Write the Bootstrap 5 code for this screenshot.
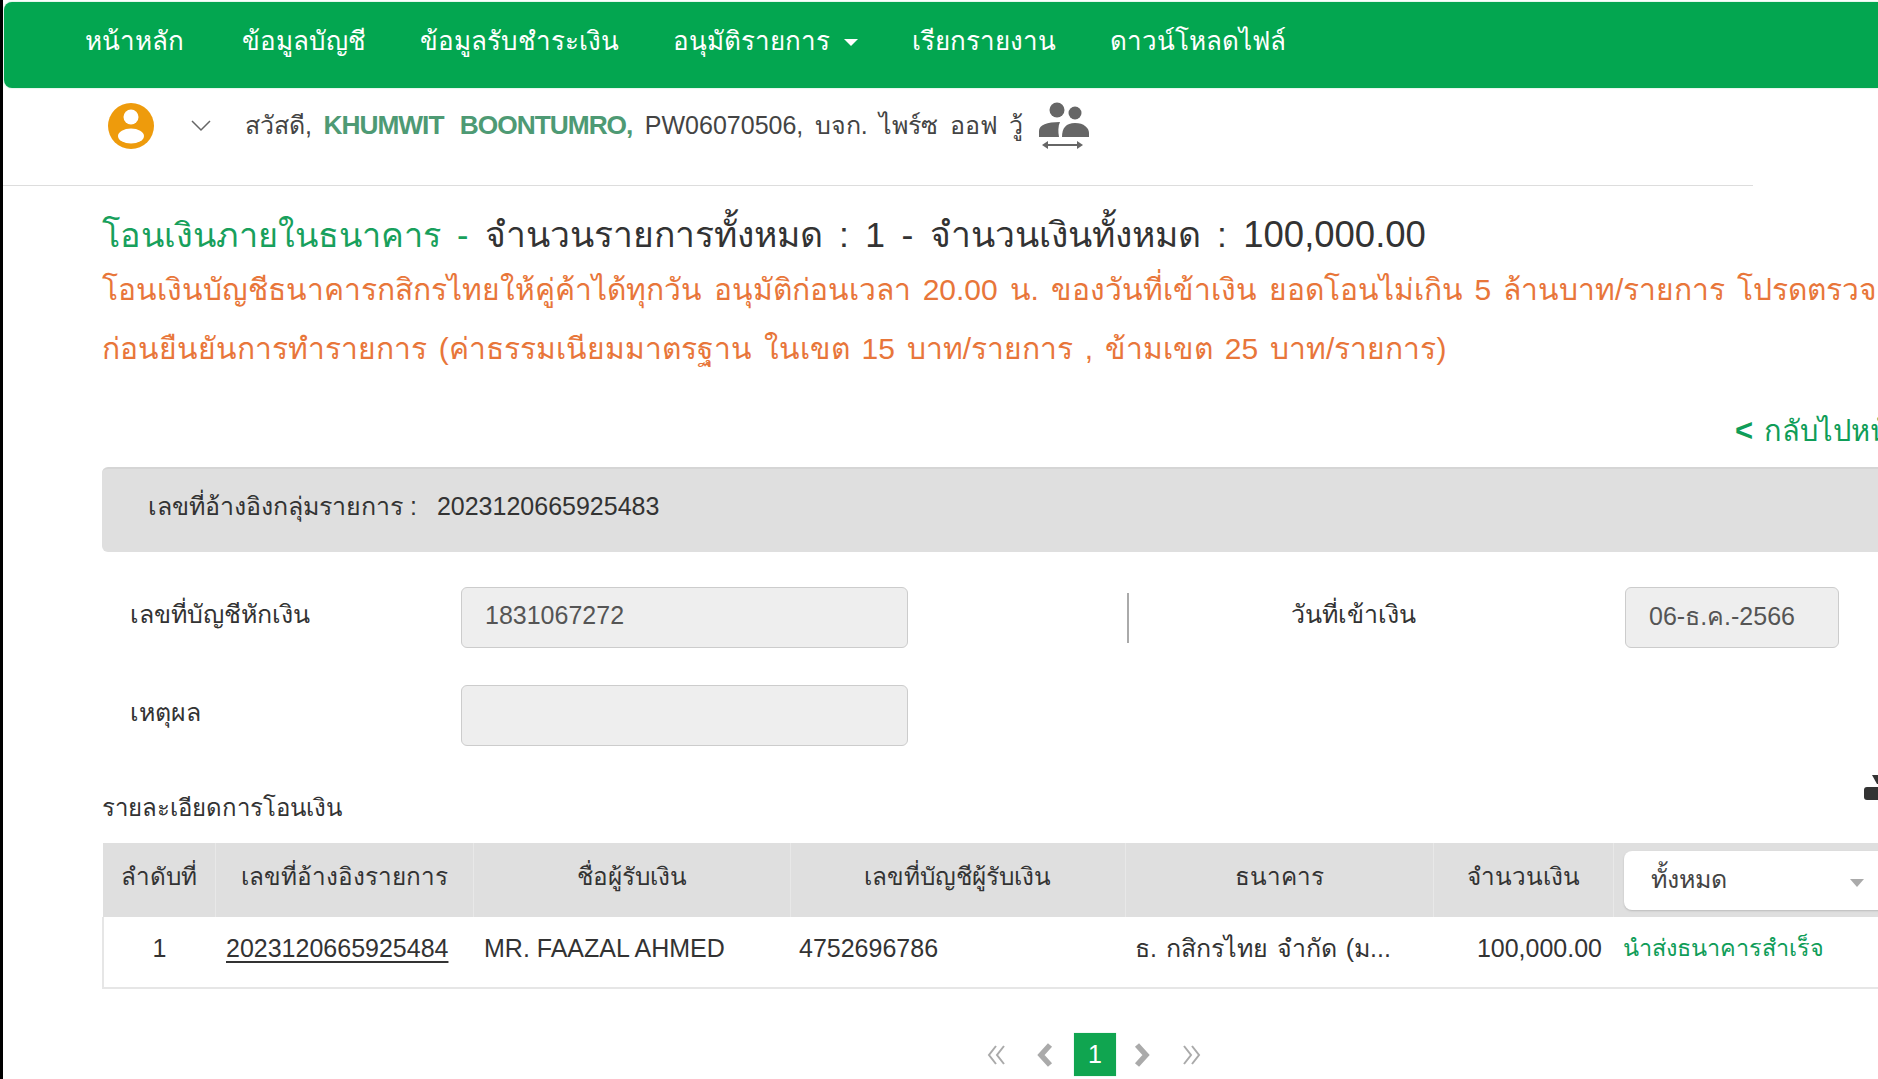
<!DOCTYPE html>
<html lang="th"><head><meta charset="utf-8">
<link href="https://cdn.jsdelivr.net/npm/bootstrap@5.3.0/dist/css/bootstrap.min.css" rel="stylesheet">
<style>
html,body{height:1079px;overflow:hidden}
body{background:#000;font-family:"Liberation Sans","Noto Sans",sans-serif;color:#333;font-size:25px;padding-left:3px}
.pagewrap{background:#fff;height:1079px;width:1875px;overflow:hidden}
.pagewrap-top{height:2px}
.topbar{background:#03a650;height:86px;margin-left:1px;border-radius:8px 0 0 8px;padding:0 0 8px 81px;gap:54px;font-size:26px;box-shadow:0 0 2px #9fdcbb}
.topbar .nav-link{color:#fff;padding:0}
.topbar .nav-link:first-child{margin-right:4px}
.caret-d{border-left:7px solid transparent;border-right:7px solid transparent;border-top:7px solid #fff;display:inline-block;margin-left:14px;vertical-align:middle}
.userrow{height:98px;width:1750px;border-bottom:1px solid #ddd;padding:0 0 21px 105px;color:#444;word-spacing:4.5px}
.uname{color:#4e9a74;font-weight:700;font-size:26.3px;letter-spacing:-1px;word-spacing:10px;margin-right:1px}
.chev-ico{margin:0 34px 0 37px}
.people-ico{margin-left:14px;margin-top:0}
.contentwrap{padding-left:99px;width:1990px}
.headline{font-size:35.5px;margin-top:27px;line-height:44px;color:#333;word-spacing:6.5px;white-space:nowrap}
.headline b{font-weight:400;color:#18a05c;font-size:34.2px}
.headline .sumval{font-size:36.5px}
.notice{color:#e8763a;font-size:30px;line-height:59px;margin-top:3px;white-space:nowrap;word-spacing:3.5px}
.backlnk{color:#0f9d58;font-size:29px;line-height:40px;margin:33px 0 0 1633px;white-space:nowrap}
.backlnk b{margin-right:11px;font-size:31px}
.refbox{background:#dfdfdf;height:85px;border-radius:6px 0 0 6px;padding:0 0 8px 46px;margin-top:16px;gap:20px;border-top:2px solid #d5d5d5}
.formgrid{display:grid;grid-template-columns:359px 447px 219px 2px 496px 214px;row-gap:37px;margin-top:35px;align-items:center}
.formgrid .form-control{background:#eee;border:1px solid #ccc;border-radius:6px;height:61px;padding:0 0 4px 23px;color:#555;font-size:25px;box-shadow:none;opacity:1}
.lbl-in{padding:0 0 6px 28px}
.lbl-date{padding:0 0 6px 162px}
.vline{height:50px;background:#aaa}
.sectionhead{margin-top:44px;line-height:36px;height:36px;font-size:24px}
.printglyph{left:1762px;top:-15px}
.sectionwrap{position:relative}
.txtable{table-layout:fixed;width:1888px;margin:17px 0 0;color:#333;border-collapse:collapse;--bs-table-bg:transparent}
.txtable th{background:#dfdfdf;font-weight:400;font-size:24.3px;height:74px;text-align:center;vertical-align:middle;padding:0 0 6px;border:0;border-right:1px solid #e8e8e8}
.txtable td{height:71px;vertical-align:middle;padding:0 0 6px 11px;white-space:nowrap;overflow:hidden;border:0;border-bottom:2px solid #e6e6e6}
.txtable tr td:first-child{border-left:2px solid #e6e6e6;text-align:center;padding-left:0}
.txtable td.acctno{padding-left:9px}
.txtable td.bankname{word-spacing:2px;padding-left:10px}
.txtable a{color:#333;text-decoration-thickness:2px;text-underline-offset:4px}
.txtable td.amt{text-align:right;padding:0 11px 6px 0}
.txtable td.okstatus{color:#0f9d58;font-size:23.5px;padding-left:10px}
.txtable th.filtercell{padding:0 0 0 10px;border:0;text-align:left}
.filter-sel{height:59px;width:300px;border-radius:8px 0 0 8px;border:0;font-size:25px;color:#444;padding:0 0 0 27px;box-shadow:0 1px 2px #bbb;background:#fff url("data:image/svg+xml,%3Csvg xmlns='http://www.w3.org/2000/svg' width='14' height='8'%3E%3Cpath d='M0 0h14L7 8z' fill='%23aaa'/%3E%3C/svg%3E") no-repeat 226px 28px}
.pager{margin:44px 0 0 861px;--bs-pagination-border-width:0;--bs-pagination-bg:transparent}
.pager .page-link{height:43px;display:flex;align-items:center;justify-content:center;padding:0;background:transparent}
.pager .page-item.active .page-link{background:#10a550;color:#fff;width:42px;font-size:25px;box-shadow:0 0 1px #9fdcbb;margin:0 12px 0 14px;border-radius:0}
.pager svg{display:block}
.pg1{width:68px}.pg2{width:30px}.pg3{width:69px}
</style></head><body>
<div class="pagewrap">
<div class="pagewrap-top"></div>
<nav class="topbar nav d-flex align-items-center">
<a class="nav-link" href="#">หน้าหลัก</a><a class="nav-link" href="#">ข้อมูลบัญชี</a><a class="nav-link" href="#">ข้อมูลรับชำระเงิน</a><a class="nav-link" href="#">อนุมัติรายการ<span class="caret-d"></span></a><a class="nav-link" href="#">เรียกรายงาน</a><a class="nav-link" href="#">ดาวน์โหลดไฟล์</a>
</nav>
<div class="userrow d-flex align-items-center">
<svg width="46" height="46" viewBox="0 0 46 46"><circle cx="23" cy="23" r="23" fill="#ee9b0c"/><circle cx="23" cy="14" r="7.5" fill="#fff"/><ellipse cx="23" cy="33" rx="13" ry="7.5" fill="#fff"/></svg>
<svg class="chev-ico" width="20" height="12" viewBox="0 0 20 12"><path d="M1 1l9 9 9-9" fill="none" stroke="#666" stroke-width="1.5"/></svg>
<span>สวัสดี, <span class="uname">KHUMWIT BOONTUMRO,</span> PW06070506, บจก. ไพร์ซ ออฟ วู้</span>
<svg class="people-ico" width="52" height="50" viewBox="0 0 52 50" fill="#666"><circle cx="20" cy="9" r="7.5"/><circle cx="38" cy="12" r="6.5"/><path d="M2 36v-6c0-6 8-9 21-9-2 4-2 10-1 15z"/><path d="M25 36c0-9 4-14 13-14s14 5 14 10v4z"/><path d="M5 44l6-4v3h29v-3l6 4-6 4v-3H11v3z"/></svg>
</div>
<div class="contentwrap">
<div class="headline"><b>โอนเงินภายในธนาคาร -</b> จำนวนรายการทั้งหมด : 1 - จำนวนเงินทั้งหมด : <span class="sumval">100,000.00</span></div>
<div class="notice">โอนเงินบัญชีธนาคารกสิกรไทยให้คู่ค้าได้ทุกวัน อนุมัติก่อนเวลา 20.00 น. ของวันที่เข้าเงิน ยอดโอนไม่เกิน 5 ล้านบาท/รายการ โปรดตรวจสอบข้อมูล<br>ก่อนยืนยันการทำรายการ (ค่าธรรมเนียมมาตรฐาน ในเขต 15 บาท/รายการ , ข้ามเขต 25 บาท/รายการ)</div>
<div class="backlnk"><b>&lt;</b>กลับไปหน้ารายการ</div>
<div class="refbox d-flex align-items-center"><span>เลขที่อ้างอิงกลุ่มรายการ :</span><span>2023120665925483</span></div>
<div class="formgrid">
<div class="lbl-in">เลขที่บัญชีหักเงิน</div>
<input class="form-control" value="1831067272" disabled>
<div></div><div class="vline"></div>
<div class="lbl-date">วันที่เข้าเงิน</div>
<input class="form-control" value="06-ธ.ค.-2566" disabled>
<div class="lbl-in">เหตุผล</div>
<input class="form-control" value="" disabled>
</div>
<div class="sectionhead sectionwrap">รายละเอียดการโอนเงิน
<svg class="printglyph position-absolute" width="30" height="28" viewBox="0 0 30 28" fill="#333"><path d="M8 0h12l-5 9H13z"/><rect x="0" y="12" width="30" height="13" rx="3"/></svg>
</div>
<table class="table txtable">
<colgroup><col style="width:112px"><col style="width:258px"><col style="width:317px"><col style="width:335px"><col style="width:308px"><col style="width:180px"><col></colgroup>
<thead><tr><th>ลำดับที่</th><th>เลขที่อ้างอิงรายการ</th><th>ชื่อผู้รับเงิน</th><th>เลขที่บัญชีผู้รับเงิน</th><th>ธนาคาร</th><th>จำนวนเงิน</th><th class="filtercell"><select class="form-select filter-sel"><option>ทั้งหมด</option></select></th></tr></thead>
<tbody><tr><td>1</td><td><a href="#">2023120665925484</a></td><td>MR. FAAZAL AHMED</td><td class="acctno">4752696786</td><td class="bankname">ธ. กสิกรไทย จำกัด (ม...</td><td class="amt">100,000.00</td><td class="okstatus">นำส่งธนาคารสำเร็จ</td></tr></tbody>
</table>
<ul class="pagination pager">
<li class="page-item"><a class="page-link pg1" href="#" aria-label="first"><svg width="20" height="22" viewBox="0 0 20 22" fill="none" stroke="#aaa" stroke-width="2"><path d="M9 2L2 11l7 9M17 2l-7 9 7 9"/></svg></a></li>
<li class="page-item"><a class="page-link pg2" href="#" aria-label="prev"><svg width="16" height="24" viewBox="0 0 16 24" fill="none" stroke="#aaa" stroke-width="5.5"><path d="M13 2L4 12l9 10"/></svg></a></li>
<li class="page-item active"><a class="page-link" href="#">1</a></li>
<li class="page-item"><a class="page-link pg2" href="#" aria-label="next"><svg width="16" height="24" viewBox="0 0 16 24" fill="none" stroke="#aaa" stroke-width="5.5"><path d="M3 2l9 10-9 10"/></svg></a></li>
<li class="page-item"><a class="page-link pg3" href="#" aria-label="last"><svg width="20" height="22" viewBox="0 0 20 22" fill="none" stroke="#aaa" stroke-width="2"><path d="M3 2l7 9-7 9M11 2l7 9-7 9"/></svg></a></li>
</ul>
</div></div>
</body></html>
